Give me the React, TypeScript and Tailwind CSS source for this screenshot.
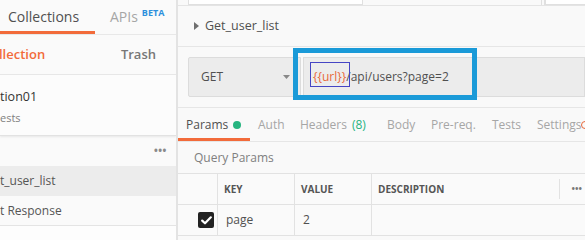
import React from "react";

const font = { fontFamily: '"Open Sans", "Noto Sans", sans-serif' };

function Sidebar() {
  return (
    <div className="w-[178px] shrink-0 h-full flex flex-col bg-[#fafafa] border-r-2 border-[#e3e3e3] overflow-hidden">
      <div className="h-[35px] shrink-0 flex items-stretch border-b border-[#e8e8e8]">
        <div className="w-[95px] shrink-0 border-b-[3px] border-[#f26b3a] flex items-center pl-[8px] text-[14px] text-[#505050] leading-none pt-[2px]">
          Collections
        </div>
        <div className="flex items-center pl-[15px] text-[14px] text-[#a6a6a6] leading-none">
          APIs
          <span className="ml-[4px] -mt-[9px] text-[9px] font-bold text-[#2d8fdc]">BETA</span>
        </div>
      </div>
      <div className="h-[40px] shrink-0 flex items-center justify-between pr-[20px] border-b border-[#e8e8e8]">
        <span className="-ml-[1px] text-[13px] font-semibold text-[#f26b3a]">llection</span>
        <span className="text-[13px] font-semibold text-[#777]">Trash</span>
      </div>
      <div className="h-[61px] shrink-0 flex flex-col pt-[13px] bg-[#fcfcfc] border-b border-[#e2e2e2] shadow-[0_1px_2px_rgba(0,0,0,0.08)]">
        <span className="text-[12.5px] text-[#333] leading-[18px]">tion01</span>
        <span className="text-[11px] text-[#808080] leading-[14px] mt-[5px]">ests</span>
      </div>
      <div className="h-[30px] shrink-0 flex items-center justify-end pr-[10px] text-[#8a8a8a] text-[14px] tracking-[-1px] leading-none">
        •••
      </div>
      <div className="h-[30px] shrink-0 flex items-center bg-[#ececec] text-[12px] text-[#555]">
        t_user_list
      </div>
      <div className="h-[30px] shrink-0 flex items-center text-[12px] text-[#555] border-b border-[#e4e4e4]">
        t Response
      </div>
      <div className="flex-1 bg-[#fdfdfd]" />
    </div>
  );
}

function Tab({ w, children, active }: { w: string; children: React.ReactNode; active?: boolean }) {
  return (
    <div
      className={
        "shrink-0 h-full flex items-center pl-[8px] text-[12px] whitespace-nowrap " +
        w +
        (active ? " border-b-[3px] border-[#f26b3a] text-[#505050] pt-[3px]" : " text-[#a6a6a6]")
      }
    >
      {children}
    </div>
  );
}

function Main() {
  return (
    <div className="flex-1 h-full flex flex-col bg-[#f9f9f9] relative overflow-hidden">
      {/* top tab strip */}
      <div className="h-[6px] shrink-0 flex border-b border-[#e4e4e4]">
        <div className="ml-[10px] w-[175px] h-[5px] bg-white border-x border-b border-[#e0e0e0]" />
        <div className="ml-[178px] w-[4px] h-[5px] border-x border-[#e0e0e0]" />
        <div className="flex-1 h-[5px] bg-white border-l border-b border-[#e0e0e0]" />
      </div>
      {/* title */}
      <div className="h-[41px] shrink-0 flex items-center pl-[16px] border-b border-[#e6e6e6]">
        <svg width="5" height="8" viewBox="0 0 5 8" className="mr-[6px]">
          <path d="M0 0 L5 4 L0 8 Z" fill="#707070" />
        </svg>
        <span className="text-[12.5px] text-[#505050]">Get_user_list</span>
      </div>
      {/* request bar */}
      <div className="h-[61px] shrink-0 flex pt-[10px] pl-[10px] border-b border-[#e6e6e6]">
        <div className="w-[113px] h-[40px] flex items-center justify-between pl-[12px] pr-[10px] bg-[#ececec] border border-[#dcdcdc] rounded-l-[2px]">
          <span className="text-[12px] text-[#505050]">GET</span>
          <svg width="7" height="4" viewBox="0 0 7 4">
            <path d="M0 0 L7 0 L3.5 4 Z" fill="#888" />
          </svg>
        </div>
        <div className="flex-1 h-[40px] ml-[2px] flex items-center pl-[9px] bg-[#ececec] border border-[#dcdcdc] text-[12px]">
          <span className="text-[#e8683a]">{"{{url}}"}</span>
          <span className="text-[#505050]">/api/users?page=2</span>
        </div>
      </div>
      {/* tabs */}
      <div className="h-[34px] shrink-0 flex items-stretch border-b border-[#e6e6e6]">
        <Tab w="w-[72px]" active>
          Params
          <span className="ml-[5px] w-[8px] h-[8px] rounded-full bg-[#26b47f]" />
        </Tab>
        <Tab w="w-[42px]">Auth</Tab>
        <Tab w="w-[87px]">
          Headers<span className="ml-[5px] text-[#26b47f]">(8)</span>
        </Tab>
        <Tab w="w-[44px]">Body</Tab>
        <Tab w="w-[61px]">Pre-req.</Tab>
        <Tab w="w-[45px]">Tests</Tab>
        <Tab w="w-[56px]">
          Settings
          <span className="ml-[-1px] w-[8px] h-[8px] shrink-0 rounded-full border-[1.5px] border-[#e8683a]" />
        </Tab>
      </div>
      {/* query params */}
      <div className="h-[31px] shrink-0 flex items-center pl-[16px] text-[12px] text-[#808080]">
        Query Params
      </div>
      {/* table */}
      <div className="grid grid-cols-[40px_77px_77px_188px_1fr] border-t border-[#e2e2e2] bg-[#fafafa]">
        <div className="h-[31px] border-r border-b border-[#e2e2e2]" />
        <div className="h-[31px] flex items-center pl-[6px] border-r border-b border-[#e2e2e2] text-[10px] font-bold text-[#555]">KEY</div>
        <div className="h-[31px] flex items-center pl-[6px] border-r border-b border-[#e2e2e2] text-[10px] font-bold text-[#555]">VALUE</div>
        <div className="h-[31px] flex items-center pl-[6px] border-b border-[#e2e2e2] text-[10px] font-bold text-[#555]">
          <span className="flex-1">DESCRIPTION</span>
          <span className="h-[20px] border-r border-[#e2e2e2]" />
        </div>
        <div className="h-[31px] flex items-center pl-[11px] border-b border-[#e2e2e2] text-[12px] text-[#777] tracking-[-1px] leading-none">•••</div>

        <div className="h-[31px] flex items-center pl-[20px] border-r border-b border-[#e2e2e2]">
          <div className="w-[16px] h-[16px] rounded-[2px] bg-[#222] flex items-center justify-center">
            <svg width="11" height="9" viewBox="0 0 11 9">
              <path d="M1.2 4.6 L4 7.3 L9.8 1.3" stroke="white" strokeWidth="2.2" fill="none" strokeLinecap="round" strokeLinejoin="round" />
            </svg>
          </div>
        </div>
        <div className="h-[31px] flex items-center pl-[8px] border-r border-b border-[#e2e2e2] text-[12px] text-[#505050]">page</div>
        <div className="h-[31px] flex items-center pl-[8px] border-r border-b border-[#e2e2e2] text-[12px] text-[#505050]">2</div>
        <div className="h-[31px] border-b border-[#e2e2e2]" />
        <div className="h-[31px] border-b border-[#e2e2e2]" />
      </div>

      {/* annotation overlays */}
      <div className="absolute left-[115px] top-[48px] w-[184px] h-[52px] border-[5px] border-[#1a9ad8]" />
      <div className="absolute left-[132px] top-[62px] w-[40px] h-[25px] border border-[#4545c4]" />
    </div>
  );
}

export default function App() {
  return (
    <div className="w-[585px] h-[240px] flex overflow-hidden bg-white" style={font}>
      <Sidebar />
      <Main />
    </div>
  );
}
